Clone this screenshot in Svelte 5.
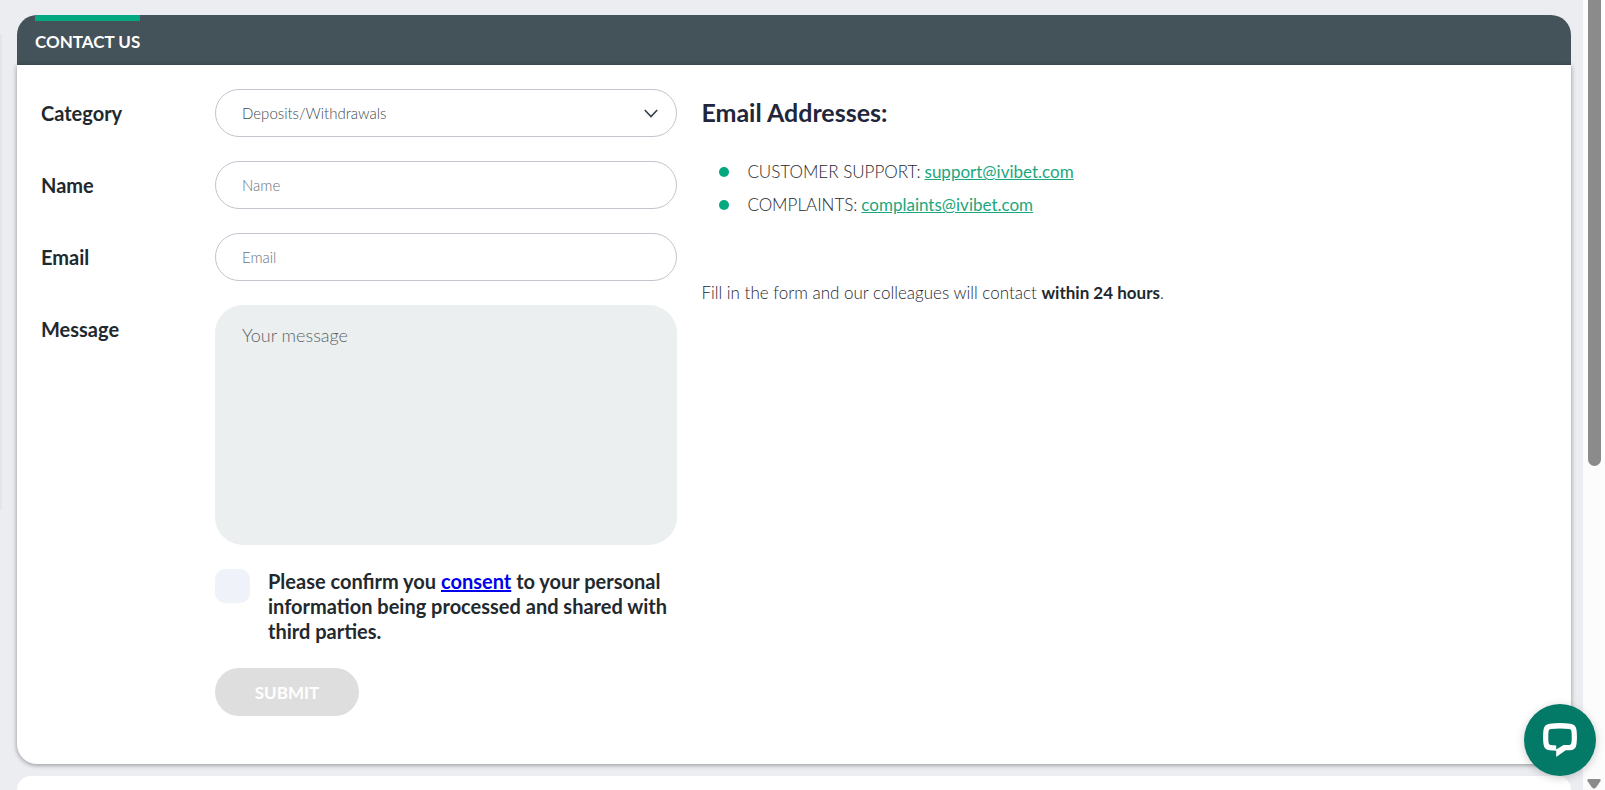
<script>
  let category = $state('Deposits/Withdrawals');
  let name = $state('');
  let email = $state('');
  let message = $state('');
  let consent = $state(false);

  const contacts = [
    { title: 'CUSTOMER SUPPORT', address: 'support@ivibet.com' },
    { title: 'COMPLAINTS', address: 'complaints@ivibet.com' }
  ];
</script>

<div class="page">
  <div class="edge"></div>
  <main>
    <section>
      <header><h1>CONTACT US</h1></header>
      <div class="body">
        <form onsubmit={(e) => e.preventDefault()}>
          <label for="category">Category</label>
          <div class="select">
            <select id="category" bind:value={category}>
              <option>Deposits/Withdrawals</option>
            </select>
            <svg viewBox="0 0 14 9" width="14" height="9" aria-hidden="true">
              <path d="M.8 1L7 7.600 13.200 1" fill="none" stroke="#353f45" stroke-width="1.600" />
            </svg>
          </div>

          <label for="name">Name</label>
          <input id="name" type="text" placeholder="Name" bind:value={name} />

          <label for="email">Email</label>
          <input id="email" type="email" placeholder="Email" bind:value={email} />

          <label for="message">Message</label>
          <textarea id="message" placeholder="Your message" bind:value={message}></textarea>

          <div class="consent">
            <input id="consent" type="checkbox" bind:checked={consent} />
            <label for="consent">Please confirm you <a href="#consent">consent</a> to your personal information being processed and shared with third parties.</label>
          </div>

          <button class="submit" type="submit" disabled>SUBMIT</button>
        </form>

        <div class="info">
          <h2>Email Addresses:</h2>
          <ul>
            {#each contacts as c}
              <li>{c.title}: <a href="mailto:{c.address}">{c.address}</a></li>
            {/each}
          </ul>
          <p>Fill in the form and our colleagues will contact <strong>within 24 hours</strong>.</p>
        </div>
      </div>
    </section>
    <div class="next"></div>
  </main>

  <div class="scrollbar">
    <div class="thumb"></div>
    <svg viewBox="0 0 14 10" width="14" height="10" aria-hidden="true">
      <path d="M1.5 0h11q1.8.3 1 2L9 8.600q-2 1.800-4 0L.5 2q-.8-1.700 1-2z" fill="#8b8b8b" />
    </svg>
  </div>

  <button class="chat" aria-label="Chat">
    <svg viewBox="0 0 34 34" width="34" height="34" aria-hidden="true">
      <path
        fill="#fff"
        fill-rule="evenodd"
        d="M6.500.8Q17-.6 27.500.8q5.300.7 6 6 .9 7.200 0 14.400-.7 5.400-6 6h-4.800L13.200 34v-6.300l-6.700-.5q-5.300-.6-6-6-.9-7.200 0-14.400.7-5.300 6-6zM7.800 6q-1.900.2-2.200 2.100-.7 5.900 0 11.800.3 1.900 2.200 2.100l5.400.4v4.200l7.400-4.600h5.600q1.900-.2 2.200-2.100.7-5.900 0-11.800-.3-1.900-2.200-2.100Q17 5 7.800 6z"
      />
    </svg>
  </button>
</div>

<style>
  :global(body) {
    margin: 0;
    background: #ebedf1;
  }
  .page {
    display: flex;
    height: 100vh;
    overflow: hidden;
    font-family: Lato, 'Liberation Sans', sans-serif;
    color: #1f292e;
  }
  .page * {
    box-sizing: border-box;
  }
  .edge {
    width: 2px;
    margin: 34px 0 280px;
    background: #dfe7ea;
  }
  main {
    flex: 1;
    display: flex;
    flex-direction: column;
    gap: 12px;
    padding: 15px 12px 0 15px;
  }
  section {
    flex: none;
  }
  header {
    height: 50px;
    padding: 0 18px;
    border-radius: 20px 20px 0 0;
    background: #445259;
  }
  h1 {
    display: inline-block;
    height: 50px;
    margin: 0;
    border-top: 6px solid #03a880;
    color: #fff;
    font-size: 17px;
    font-weight: 700;
    line-height: 42px;
  }
  .body {
    display: grid;
    grid-template-columns: 73fr 97fr;
    gap: 24px;
    padding: 24px 24px 48px;
    border-radius: 0 0 20px 20px;
    background: #fff;
    box-shadow: 0 1px 5px rgba(0, 0, 0, 0.4);
  }
  form {
    display: grid;
    grid-template-columns: 174px 1fr;
    row-gap: 24px;
    align-content: start;
  }
  form > label {
    font-size: 20px;
    font-weight: 700;
    line-height: 48px;
  }
  select,
  input[type='text'],
  input[type='email'] {
    width: 100%;
    height: 48px;
    margin: 0;
    padding: 0 26px;
    border: 1px solid #c0c6cc;
    border-radius: 24px;
    background: #fff;
    color: #414b51;
    font: 300 15px Lato, 'Liberation Sans', sans-serif;
    appearance: none;
    outline: none;
  }
  .select {
    position: relative;
  }
  .select svg {
    position: absolute;
    right: 19px;
    top: 20px;
    pointer-events: none;
  }
  input::placeholder {
    color: #68727a;
  }
  textarea {
    display: block;
    height: 240px;
    padding: 18px 27px;
    border: 0;
    border-radius: 28px;
    background: #ebeff0;
    color: #414b51;
    font: 300 18px/24px Lato, 'Liberation Sans', sans-serif;
    resize: none;
    outline: none;
  }
  textarea::placeholder {
    color: #5c6366;
  }
  .consent {
    grid-column: 2;
    display: flex;
    align-items: flex-start;
    gap: 18px;
  }
  .consent input {
    flex: none;
    width: 35px;
    height: 34px;
    margin: 0;
    border-radius: 10px;
    background: #eff2f9;
    appearance: none;
  }
  .consent label {
    font-size: 20px;
    font-weight: 700;
    line-height: 25px;
  }
  .consent a {
    color: #0000ee;
  }
  .submit {
    grid-column: 2;
    justify-self: start;
    width: 144px;
    height: 48px;
    padding: 1px 0 0;
    border: 0;
    border-radius: 24px;
    background: #dedede;
    color: #fff;
    font: 700 17px Lato, 'Liberation Sans', sans-serif;
  }
  h2 {
    margin: 0;
    color: #22263a;
    font-size: 25px;
    font-weight: 700;
    line-height: 46px;
  }
  .info {
    font-size: 17px;
    font-weight: 300;
  }
  ul {
    margin: 20px 0 60px;
    padding: 0 0 0 18px;
    list-style: none;
  }
  li {
    display: flex;
    align-items: center;
    gap: 4px;
    line-height: 33px;
  }
  li::before {
    content: '';
    width: 10px;
    height: 10px;
    margin-right: 14px;
    border-radius: 50%;
    background: #03a880;
  }
  li a {
    color: #1ba77e;
    font-weight: 400;
  }
  p {
    margin: 0;
    line-height: 24px;
  }
  strong {
    font-weight: 700;
  }
  .next {
    flex: 1;
    border-radius: 20px 20px 0 0;
    background: #fff;
  }
  .scrollbar {
    display: flex;
    flex-direction: column;
    justify-content: space-between;
    align-items: center;
    width: 22px;
    padding-bottom: 1px;
    background: #fcfcfc;
  }
  .thumb {
    width: 13px;
    height: 59%;
    border-radius: 0 0 7px 7px;
    background: #8b8b8b;
  }
  .chat {
    position: fixed;
    right: 9px;
    bottom: 14px;
    display: grid;
    place-items: center;
    width: 72px;
    height: 72px;
    padding: 0;
    border: 0;
    border-radius: 50%;
    background: #037968;
    box-shadow: 0 2px 8px rgba(0, 0, 0, 0.2);
  }
</style>
